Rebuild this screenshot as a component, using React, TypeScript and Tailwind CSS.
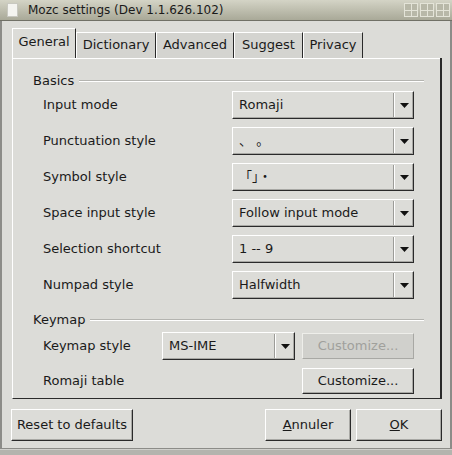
import React from 'react';

// GTK-style settings dialog: title bar, tab strip, grouped combo rows and footer buttons

const basics: { label: string; value: string }[] = [
  { label: 'Input mode', value: 'Romaji' },
  { label: 'Punctuation style', value: '、 。' },
  { label: 'Symbol style', value: '「」・' },
  { label: 'Space input style', value: 'Follow input mode' },
  { label: 'Selection shortcut', value: '1 -- 9' },
  { label: 'Numpad style', value: 'Halfwidth' },
];

const tabs = [
  { name: 'Dictionary', w: 'w-[80px]' },
  { name: 'Advanced', w: 'w-[78px]' },
  { name: 'Suggest', w: 'w-[69px]' },
  { name: 'Privacy', w: 'w-[60px]' },
];

function TitleButton() {
  return (
    <div className="grid h-[14px] w-[14px] grid-cols-2 gap-[1px] border border-[#e4e4d8] bg-[#e4e4d8] p-0">
      <div className="bg-[#b8b8a8]" />
      <div className="bg-[#b8b8a8]" />
      <div className="bg-[#b8b8a8]" />
      <div className="bg-[#b8b8a8]" />
    </div>
  );
}

function Combo({ value, w }: { value: string; w: string }) {
  return (
    <div
      className={`flex h-[28px] ${w} items-center border-t border-l border-t-white border-l-white border-r border-b border-r-[#2a2a2a] border-b-[#2a2a2a] bg-[#dcdcd8] shadow-[inset_-1px_-1px_0_#a8a8a4]`}
    >
      <span className="flex-1 truncate pl-[6px] text-[13px] text-[#1a1a1a]">{value}</span>
      <div className="flex h-[24px] items-center">
        <div className="h-full w-[1px] bg-[#9c9c98]" />
        <div className="h-full w-[1px] bg-white" />
      </div>
      <div className="flex w-[18px] items-center justify-center">
        <svg width="9" height="5" viewBox="0 0 9 5">
          <path d="M0 0h9L4.5 5z" fill="#111" />
        </svg>
      </div>
    </div>
  );
}

function Button({
  children,
  w,
  h = 'h-[26px]',
  disabled = false,
}: {
  children: React.ReactNode;
  w: string;
  h?: string;
  disabled?: boolean;
}) {
  return (
    <button
      className={
        disabled
          ? `${w} ${h} border border-t-[#eeeeea] border-l-[#eeeeea] border-r-[#a8a8a4] border-b-[#a8a8a4] bg-[#d0d0cc] text-[13px] text-[#a0a09c]`
          : `${w} ${h} border border-t-white border-l-white border-r-[#2a2a2a] border-b-[#2a2a2a] bg-[#dcdcd8] text-[13px] text-[#1a1a1a] shadow-[inset_-1px_-1px_0_#a8a8a4]`
      }
    >
      {children}
    </button>
  );
}

function GroupHeader({ title, mt }: { title: string; mt: string }) {
  return (
    <div className={`${mt} flex h-[16px] items-center pl-[20px] pr-[16px]`}>
      <span className="text-[13px] text-[#1a1a1a]">{title}</span>
      <div className="ml-[5px] flex-1 border-t border-b border-t-[#b4b4b0] border-b-white" />
    </div>
  );
}

export default function App() {
  return (
    <div
      className="flex h-[455px] w-[452px] flex-col bg-[#dcdcd8] text-[#1a1a1a]"
      style={{ fontFamily: '"DejaVu Sans", "Noto Sans CJK JP", sans-serif' }}
    >
      {/* title bar */}
      <div className="flex h-[21px] items-center border-b border-b-[#707066] bg-gradient-to-b from-[#d4d4c6] to-[#a9a998] pl-[7px] pr-[2px]">
        <div className="h-[14px] w-[11px] border border-[#c8c8c0] bg-[#f4f4f0]" />
        <span className="ml-[10px] text-[12px] text-[#1a1a1a]">Mozc settings (Dev 1.1.626.102)</span>
        <div className="ml-auto flex gap-[2px]">
          <TitleButton />
          <TitleButton />
          <TitleButton />
        </div>
      </div>

      <div className="flex flex-1 flex-col border-x-[2px] border-x-[#8c8c88]">
        {/* tab strip */}
        <div className="mt-[7px] flex h-[30px] items-end pl-[10px]">
          <div className="flex h-[30px] w-[64px] items-center justify-center border-t border-l border-t-white border-l-white border-r border-r-[#2a2a2a] bg-[#dcdcd8] pb-[3px] text-[13px]">
            General
          </div>
          {tabs.map((t) => (
            <div
              key={t.name}
              className={`flex h-[26px] ${t.w} items-center justify-center border-t border-l border-t-white border-l-white border-r border-r-[#2a2a2a] bg-[#d4d4d0] pb-[1px] text-[13px]`}
            >
              {t.name}
            </div>
          ))}
        </div>

        {/* tab panel */}
        <div className="ml-[10px] flex h-[341px] w-[430px] flex-col border-l border-l-white border-r-[2px] border-r-[#2a2a2a] border-b border-b-[#2a2a2a] shadow-[inset_0_1px_0_white]">
          <GroupHeader title="Basics" mt="mt-[15px]" />
          <div className="mt-[2px] flex flex-col gap-[8px]">
            {basics.map((row) => (
              <div key={row.label} className="flex h-[28px] items-center">
                <span className="w-[219px] pl-[30px] text-[13px]">{row.label}</span>
                <Combo value={row.value} w="w-[182px]" />
              </div>
            ))}
          </div>

          <GroupHeader title="Keymap" mt="mt-[13px]" />
          <div className="mt-[4px] flex h-[28px] items-center">
            <span className="w-[149px] pl-[30px] text-[13px]">Keymap style</span>
            <Combo value="MS-IME" w="w-[133px]" />
            <div className="ml-[7px]">
              <Button w="w-[112px]" disabled>
                Customize...
              </Button>
            </div>
          </div>
          <div className="mt-[8px] flex h-[26px] items-center">
            <span className="w-[289px] pl-[30px] text-[13px]">Romaji table</span>
            <Button w="w-[112px]">Customize...</Button>
          </div>
        </div>

        {/* footer */}
        <div className="mt-[10px] flex pl-[9px] pr-[8px]">
          <Button w="w-[122px]" h="h-[32px]">
            Reset to defaults
          </Button>
          <div className="ml-auto flex gap-[5px]">
            <Button w="w-[86px]" h="h-[32px]">
              <u>A</u>nnuler
            </Button>
            <Button w="w-[86px]" h="h-[32px]">
              <u>O</u>K
            </Button>
          </div>
        </div>
        <div className="flex-1" />
      </div>
      {/* bottom frame */}
      <div className="h-[7px] border-t border-t-[#8c8c88] bg-[#b4b4ae] shadow-[inset_0_1px_0_#d0d0cc]" />
    </div>
  );
}
